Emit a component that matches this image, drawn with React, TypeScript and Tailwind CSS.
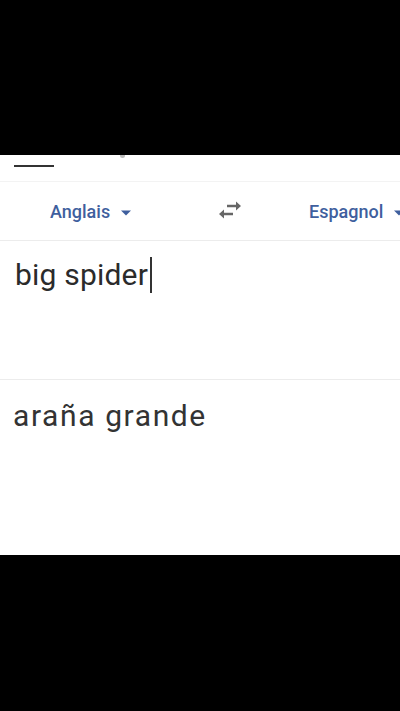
import React from 'react';

const Caret: React.FC = () => (
  <svg width="12" height="8" viewBox="0 0 12 8" className="ml-[10px] mt-[3px]">
    <path d="M1 1.5 L6 6.5 L11 1.5 Z" fill="#3f5f9e" />
  </svg>
);

const App: React.FC = () => {
  return (
    <div className="w-[400px] h-[711px] bg-black flex flex-col overflow-hidden" style={{ fontFamily: 'Roboto, "Liberation Sans", sans-serif' }}>
      <div className="h-[155px] shrink-0" />
      <div className="h-[400px] shrink-0 bg-white flex flex-col">
        {/* tab strip, cut at the top */}
        <div className="h-[27px] relative border-b border-[#f3f3f3]">
          <div className="absolute left-[120px] top-0 w-[5px] h-[3px] rounded-b bg-[#bbb]" />
          <div className="absolute left-[14px] top-[10px] w-[40px] h-[2px] bg-[#333]" />
        </div>
        {/* language row */}
        <div className="h-[59px] flex items-center border-b border-[#ececec] relative">
          <div className="absolute left-[50px] top-[16px] flex items-center text-[18px] font-medium text-[#3f5f9e]">
            Anglais
            <Caret />
          </div>
          <svg width="26" height="20" viewBox="0 0 26 20" className="absolute left-[217px] top-[18px]">
            <path d="M10 6 H22" stroke="#666" strokeWidth="2.5" />
            <path d="M19 1.5 L24 6 L19 10.5 Z" fill="#666" />
            <path d="M16 14 H4" stroke="#666" strokeWidth="2.5" />
            <path d="M7 9.5 L2 14 L7 18.5 Z" fill="#666" />
          </svg>
          <div className="absolute left-[309px] top-[16px] flex items-center text-[18px] font-medium text-[#3f5f9e] whitespace-nowrap">
            Espagnol
            <Caret />
          </div>
        </div>
        {/* input */}
        <div className="h-[139px] border-b border-[#ececec] px-[15px] pt-[14px]">
          <div className="text-[30px] leading-[40px] tracking-[0.2px] text-[#2b2b2b] flex items-center">
            big spider
            <span className="inline-block w-[2px] h-[36px] bg-[#333] ml-[2px]" />
          </div>
        </div>
        {/* output */}
        <div className="flex-1 px-[13px] pt-[16px]">
          <div className="text-[30px] leading-[40px] tracking-[1.6px] text-[#333]">araña grande</div>
        </div>
      </div>
      <div className="flex-1" />
    </div>
  );
};

export default App;
